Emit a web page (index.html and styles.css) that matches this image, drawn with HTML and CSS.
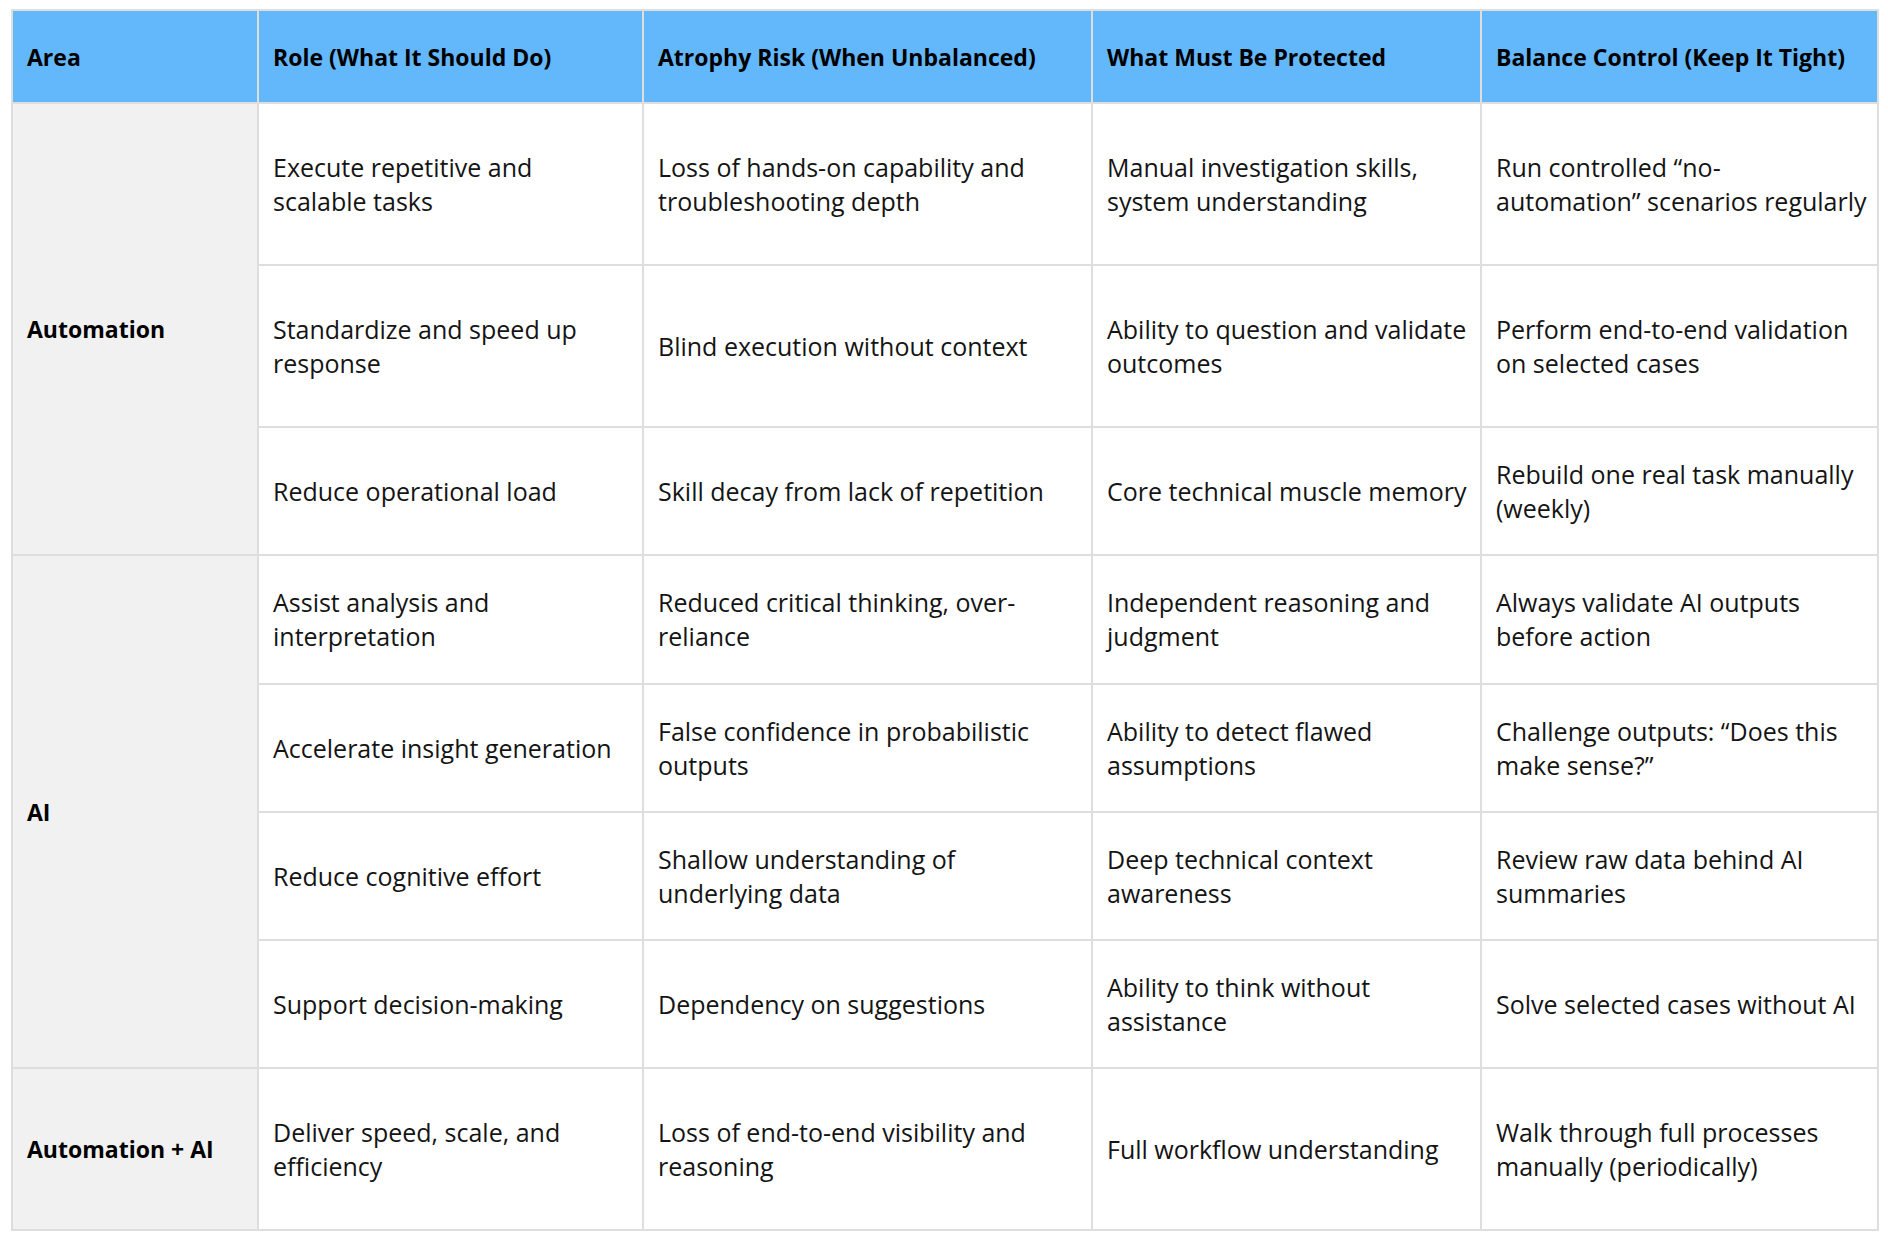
FILE: index.html
```html
<!DOCTYPE html>
<html lang="en">
<head>
<meta charset="utf-8">
<title>Automation and AI Balance</title>
<link rel="stylesheet" href="styles.css">
</head>
<body>
<table class="grid">
  <colgroup>
    <col class="c-area">
    <col class="c-role">
    <col class="c-risk">
    <col class="c-protect">
    <col class="c-control">
  </colgroup>
  <thead>
    <tr class="head">
      <th>Area</th>
      <th>Role (What It Should Do)</th>
      <th>Atrophy Risk (When Unbalanced)</th>
      <th>What Must Be Protected</th>
      <th>Balance Control (Keep It Tight)</th>
    </tr>
  </thead>
  <tbody>
    <tr class="r-tall">
      <td class="area" rowspan="3">Automation</td>
      <td>Execute repetitive and scalable tasks</td>
      <td>Loss of hands-on capability and troubleshooting depth</td>
      <td>Manual investigation skills, system understanding</td>
      <td class="ctl">Run controlled “no-<br>automation” scenarios regularly</td>
    </tr>
    <tr class="r-tall">
      <td>Standardize and speed up response</td>
      <td>Blind execution without context</td>
      <td>Ability to question and validate outcomes</td>
      <td class="ctl">Perform end-to-end validation on selected cases</td>
    </tr>
    <tr class="r-short">
      <td>Reduce operational load</td>
      <td>Skill decay from lack of repetition</td>
      <td>Core technical muscle memory</td>
      <td class="ctl">Rebuild one real task manually (weekly)</td>
    </tr>
    <tr class="r-mid">
      <td class="area" rowspan="4">AI</td>
      <td>Assist analysis and interpretation</td>
      <td>Reduced critical thinking, over-reliance</td>
      <td>Independent reasoning and judgment</td>
      <td class="ctl">Always validate AI outputs before action</td>
    </tr>
    <tr class="r-short">
      <td>Accelerate insight generation</td>
      <td>False confidence in probabilistic outputs</td>
      <td>Ability to detect flawed assumptions</td>
      <td class="ctl">Challenge outputs: “Does this make sense?”</td>
    </tr>
    <tr class="r-mid">
      <td>Reduce cognitive effort</td>
      <td>Shallow understanding of underlying data</td>
      <td>Deep technical context awareness</td>
      <td class="ctl">Review raw data behind AI summaries</td>
    </tr>
    <tr class="r-short">
      <td>Support decision-making</td>
      <td>Dependency on suggestions</td>
      <td>Ability to think without assistance</td>
      <td class="ctl">Solve selected cases without AI</td>
    </tr>
    <tr class="r-tall">
      <td class="area">Automation + AI</td>
      <td>Deliver speed, scale, and efficiency</td>
      <td>Loss of end-to-end visibility and reasoning</td>
      <td>Full workflow understanding</td>
      <td class="ctl">Walk through full processes manually (periodically)</td>
    </tr>
  </tbody>
</table>
</body>
</html>
```

FILE: styles.css
```css
html, body {
  margin: 0;
  padding: 0;
  background: #ffffff;
}

body {
  padding: 9px 0 0 11px;
  font-family: "Open Sans", "Noto Sans", sans-serif;
  color: #141414;
}

.grid {
  border-collapse: collapse;
  table-layout: fixed;
  width: 1866px;
  font-size: 25px;
  line-height: 34px;
}

.c-area { width: 246px; }
.c-role { width: 385px; }
.c-risk { width: 449px; }
.c-protect { width: 389px; }
.c-control { width: 397px; }

.grid th,
.grid td {
  border: 2px solid #dedede;
  padding: 0 12px 0 14px;
  text-align: left;
  vertical-align: middle;
}

.grid td.ctl {
  padding-right: 2px;
}

.head {
  height: 93px;
}

.head th {
  background: #63b8fc;
  font-weight: 700;
  font-size: 23px;
  color: #000000;
}

.grid td {
  font-weight: 400;
}

.area {
  background: #f1f1f1;
  font-weight: 700 !important;
  font-size: 23px;
  color: #000000;
}

.r-tall { height: 162px; }
.r-mid { height: 128.5px; }
.r-short { height: 128px; }
```
